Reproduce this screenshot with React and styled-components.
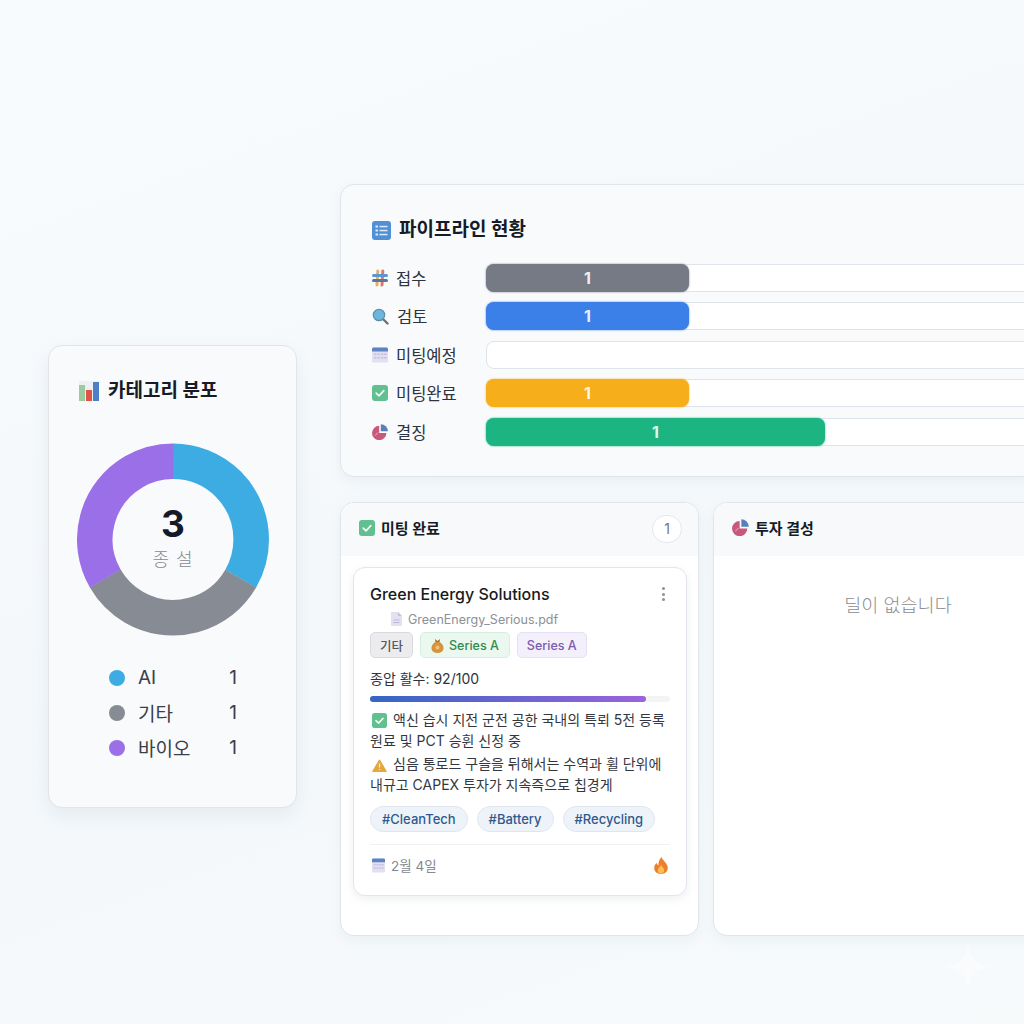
import React from 'react';
import styled, { createGlobalStyle } from 'styled-components';

const GlobalStyle = createGlobalStyle`
  html, body {
    margin: 0;
    padding: 0;
    background: #f6fafc;
  }
  * {
    box-sizing: border-box;
  }
`;

const Page = styled.div`
  position: relative;
  width: 1024px;
  height: 1024px;
  overflow: hidden;
  display: flex;
  align-items: flex-start;
  gap: 43px;
  padding: 184px 0 0 48px;
  background: linear-gradient(160deg, #f8fbfd 0%, #f4f8fb 55%, #f6fafb 100%);
  font-family: Inter, "Noto Sans CJK KR", sans-serif;
  color: #161b26;
`;

const CategoryCard = styled.section`
  flex: 0 0 249px;
  height: 463px;
  margin-top: 161px;
  padding: 33px 0 0 30px;
  background: #f9fafc;
  border: 1px solid #e1e5ea;
  border-radius: 14px;
  box-shadow: 0 8px 18px rgba(140, 155, 175, 0.14);
`;

const CardTitle = styled.h2`
  display: flex;
  align-items: center;
  gap: ${(p) => p.$gap || 9}px;
  margin: 0;
  height: 24px;
  font-size: 19px;
  font-weight: 700;
  line-height: 24px;
  color: #161b26;
`;

const DonutBox = styled.div`
  position: relative;
  width: 192px;
  height: 193px;
  margin: 40px 0 0 -2px;
`;

const DonutCenter = styled.div`
  position: absolute;
  inset: 0;
  display: flex;
  flex-direction: column;
  align-items: center;
  justify-content: center;
`;

const DonutValue = styled.div`
  margin-top: -3px;
  font-size: 37px;
  font-weight: 700;
  line-height: 40px;
  color: #151a2b;
`;

const DonutLabel = styled.div`
  margin-top: 4px;
  font-size: 18px;
  line-height: 24px;
  letter-spacing: 1px;
  font-weight: 300;
  color: #85898f;
`;

const Legend = styled.ul`
  list-style: none;
  margin: 28.5px 0 0 30px;
  padding: 0;
  width: 128px;
  display: flex;
  flex-direction: column;
  gap: 9px;
`;

const LegendRow = styled.li`
  display: flex;
  align-items: center;
  height: 26px;
  font-size: 19px;
  font-weight: 400;
  color: #3a3f49;
`;

const LegendDot = styled.span`
  flex: 0 0 16px;
  height: 16px;
  margin-right: 13px;
  border-radius: 50%;
  background: ${(p) => p.$color};
`;

const LegendName = styled.span`
  flex: 1;
`;

const RightColumn = styled.div`
  flex: 0 0 auto;
  display: flex;
  flex-direction: column;
  gap: 25px;
`;

const PipelineCard = styled.section`
  width: 1195px;
  height: 293px;
  padding: 33px 32px 0 31px;
  background: #f9fafc;
  border: 1px solid #e1e5ea;
  border-radius: 14px;
  box-shadow: 0 4px 12px rgba(140, 155, 175, 0.1);
`;

const PipelineRows = styled.div`
  display: flex;
  flex-direction: column;
  gap: 10.5px;
  margin-top: 21.5px;
`;

const PipelineRow = styled.div`
  display: flex;
  align-items: center;
  height: 28px;
`;

const StageLabel = styled.div`
  flex: 0 0 114px;
  display: flex;
  align-items: center;
  gap: 8px;
  font-size: 16.5px;
  font-weight: 400;
  color: #2e333d;
`;

const Track = styled.div`
  flex: 1;
  height: 28px;
  background: #fff;
  border: 1px solid #dfe3ea;
  border-radius: 8px;
`;

const Fill = styled.div`
  height: 28px;
  margin: -1px;
  display: flex;
  align-items: center;
  justify-content: center;
  border-radius: 8px;
  background: ${(p) => p.$color};
  box-shadow: 0 0 2px ${(p) => p.$color};
  color: rgba(255, 255, 255, 0.9);
  font-size: 16px;
  font-weight: 700;
`;

const Columns = styled.div`
  display: flex;
  gap: 14px;
`;

const Column = styled.section`
  width: ${(p) => p.$width}px;
  height: 434px;
  overflow: hidden;
  background: #fff;
  border: 1px solid #e1e5ea;
  border-radius: 14px;
  box-shadow: 0 4px 12px rgba(140, 155, 175, 0.1);
`;

const ColumnHeader = styled.header`
  display: flex;
  align-items: center;
  justify-content: space-between;
  height: 53px;
  padding: 0 16px 0 18px;
  background: #f7f9fb;
`;

const ColumnTitle = styled.h3`
  display: flex;
  align-items: center;
  gap: 6px;
  margin: -4px 0 0;
  font-size: 15px;
  font-weight: 700;
  color: #161b26;
`;

const CountBadge = styled.span`
  display: flex;
  align-items: center;
  justify-content: center;
  width: 30px;
  height: 28px;
  margin-top: -2px;
  background: #fff;
  border: 1px solid #e3e6eb;
  border-radius: 14px;
  font-size: 14px;
  color: #71767f;
`;

const ColumnBody = styled.div`
  padding: 11px 11px 11px 12px;
`;

const EmptyText = styled.div`
  padding-top: 35px;
  text-align: center;
  font-size: 18.5px;
  font-weight: 300;
  color: #8a8d92;
`;

const DealCard = styled.article`
  height: 329px;
  padding: 14px 16px 0;
  background: #fff;
  border: 1px solid #e2e5eb;
  border-radius: 12px;
  box-shadow: 0 3px 9px rgba(130, 145, 165, 0.14);
`;

const DealHead = styled.div`
  display: flex;
  align-items: center;
  justify-content: space-between;
  height: 24px;
`;

const DealName = styled.div`
  font-size: 16px;
  font-weight: 500;
  color: #171a20;
`;

const MoreDots = styled.div`
  display: flex;
  flex-direction: column;
  gap: 2.5px;
  margin-right: 5px;

  span {
    width: 3px;
    height: 3px;
    border-radius: 50%;
    background: #8f9399;
  }
`;

const FileLine = styled.div`
  display: flex;
  align-items: center;
  gap: 6px;
  height: 20px;
  margin: 3px 0 0 21px;
  font-size: 12.5px;
  color: #8d9096;
`;

const TagRow = styled.div`
  display: flex;
  gap: 7px;
  margin-top: 3px;
`;

const Tag = styled.span`
  display: flex;
  align-items: center;
  gap: 5px;
  height: 26px;
  padding: 0 ${(p) => p.$pad || 10}px;
  border-radius: 5px;
  font-size: 12.5px;
  font-weight: 500;
  color: ${(p) => p.$color};
  background: ${(p) => p.$bg};
  border: 1px solid ${(p) => p.$line};
`;

const ScoreText = styled.div`
  height: 20px;
  margin-top: 11px;
  font-size: 14px;
  line-height: 20px;
  color: #2e333d;
`;

const ScoreTrack = styled.div`
  height: 6px;
  margin-top: 7px;
  background: #f3f4f6;
  border-radius: 3px;
`;

const ScoreFill = styled.div`
  height: 6px;
  border-radius: 3px;
  background: linear-gradient(90deg, #3565c4 0%, #9b63dc 100%);
`;

const Notes = styled.div`
  margin-top: 7px;
  display: flex;
  flex-direction: column;
  gap: 2px;
`;

const Note = styled.p`
  margin: 0;
  width: 300px;
  font-size: 14px;
  line-height: 21px;
  color: #33373f;
  word-break: keep-all;

  svg {
    vertical-align: -3px;
    margin: 0 6px 0 2px;
  }
`;

const HashRow = styled.div`
  display: flex;
  gap: 9px;
  margin-top: 11px;
`;

const HashTag = styled.span`
  display: flex;
  align-items: center;
  height: 26px;
  padding: 0 11px;
  background: #eef3fa;
  border: 1px solid #e0e6f0;
  border-radius: 13px;
  font-size: 13px;
  font-weight: 500;
  color: #2f5a8e;
`;

const DealFooter = styled.div`
  display: flex;
  align-items: center;
  justify-content: space-between;
  height: 41px;
  margin-top: 12px;
  padding-right: 2px;
  border-top: 1px solid #f0f1f4;
`;

const DateText = styled.div`
  display: flex;
  align-items: center;
  gap: 6px;
  padding-left: 2px;
  font-size: 13.5px;
  color: #85898f;
`;

const Sparkle = styled.svg`
  position: absolute;
  left: 944px;
  top: 942px;
  opacity: 0.5;
`;

const ListIcon = () => (
  <svg width="19" height="19" viewBox="0 0 19 19">
    <rect width="19" height="19" rx="3" fill="#5290d6" />
    <g fill="#dcebf8">
      <rect x="3.5" y="4.5" width="2.5" height="2" />
      <rect x="3.5" y="8.5" width="2.5" height="2" />
      <rect x="3.5" y="12.5" width="2.5" height="2" />
      <rect x="7.5" y="4.8" width="8" height="1.5" />
      <rect x="7.5" y="8.8" width="8" height="1.5" />
      <rect x="7.5" y="12.8" width="8" height="1.5" />
    </g>
  </svg>
);

const BarsIcon = () => (
  <svg width="20" height="20" viewBox="0 0 20 20">
    <rect width="20" height="20" fill="#eef0f3" />
    <rect x="0" y="4" width="6" height="16" fill="#9bcb9f" />
    <rect x="7" y="9" width="6" height="11" fill="#de5548" />
    <rect x="14" y="1" width="6" height="19" fill="#4d7fc6" />
  </svg>
);

const HashIcon = () => (
  <svg width="16" height="18" viewBox="0 0 16 18" strokeWidth="3" strokeLinecap="round">
    <path d="M5.8 2 L5 16" stroke="#e2b262" />
    <path d="M10.8 2 L10 16" stroke="#e0776b" />
    <path d="M1.5 6.5 H14.5" stroke="#5a95d8" />
    <path d="M1.5 11.5 H14.5" stroke="#55789f" />
  </svg>
);

const SearchIcon = () => (
  <svg width="17" height="17" viewBox="0 0 17 17">
    <path d="M10.5 10.5 L15.5 15.5" stroke="#6b6f76" strokeWidth="2.4" strokeLinecap="round" />
    <circle cx="7" cy="7" r="5.7" fill="#6cb6de" stroke="#5a8fa8" strokeWidth="1.2" />
  </svg>
);

const CalendarIcon = ({ width = 16, height = 16 }) => (
  <svg width={width} height={height} viewBox="0 0 16 16" preserveAspectRatio="none">
    <rect x="0" y="0.5" width="16" height="15" rx="1.5" fill="#e2dff2" />
    <path d="M0 2 a1.5 1.5 0 0 1 1.5-1.5 h13 a1.5 1.5 0 0 1 1.5 1.5 v2.5 h-16z" fill="#5b84c0" />
    <g fill="#c4c1e0">
      <rect x="2" y="6.5" width="2.5" height="1.5" />
      <rect x="5.5" y="6.5" width="2.5" height="1.5" />
      <rect x="9" y="6.5" width="2.5" height="1.5" />
      <rect x="12" y="6.5" width="2.5" height="1.5" />
      <rect x="2" y="10" width="2.5" height="1.5" />
      <rect x="5.5" y="10" width="2.5" height="1.5" />
      <rect x="9" y="10" width="2.5" height="1.5" />
      <rect x="12" y="10" width="2.5" height="1.5" />
    </g>
  </svg>
);

const CheckIcon = ({ size = 16 }) => (
  <svg width={size} height={size} viewBox="0 0 16 16">
    <rect width="16" height="16" rx="3" fill="#62bf8f" />
    <path d="M4.2 8.2 L7 10.8 L11.8 5.6" fill="none" stroke="#f2fbf6" strokeWidth="1.7" strokeLinecap="round" strokeLinejoin="round" />
  </svg>
);

const PieIcon = ({ size = 16 }) => (
  <svg width={size} height={size} viewBox="0 0 16 16">
    <path d="M7.2 1.8 A7.2 7.2 0 1 0 14.4 9 H7.2 Z" fill="#c9597c" />
    <path d="M8.8 0.2 A7 7 0 0 1 15.8 7.2 H8.8 Z" fill="#5a7fb8" />
    <path d="M3.2 11.5 L6 8.5" stroke="#eeb7c7" strokeWidth="0.9" />
  </svg>
);

const FileIcon = () => (
  <svg width="11" height="14" viewBox="0 0 11 14">
    <path d="M0 1 a1 1 0 0 1 1-1 h6 l4 4 v9 a1 1 0 0 1-1 1 h-9 a1 1 0 0 1-1-1z" fill="#e3e0f1" />
    <path d="M7 0 l4 4 h-4z" fill="#c4c1de" />
    <path d="M2.5 8 h6 M2.5 10.5 h6" stroke="#bdbad8" strokeWidth="1" />
  </svg>
);

const MoneyBagIcon = () => (
  <svg width="13" height="15" viewBox="0 0 13 15">
    <path d="M4 1 L6.5 3 L9 1 L8.5 4 H4.5 Z" fill="#a9702c" />
    <path d="M4.3 4 C1.5 6 0 8.5 0.5 11 C1 13.6 3.5 15 6.5 15 C9.5 15 12 13.6 12.5 11 C13 8.5 11.5 6 8.7 4 Z" fill="#d8933d" />
    <circle cx="6.5" cy="9.5" r="2" fill="#efc27a" />
  </svg>
);

const WarningIcon = () => (
  <svg width="15" height="13" viewBox="0 0 15 13">
    <path d="M7.5 0.8 L14.4 12.4 H0.6 Z" fill="#e3a73f" stroke="#e3a73f" strokeLinejoin="round" />
    <path d="M7.5 4.5 V8.5 M7.5 10 V11" stroke="#fff2d4" strokeWidth="1.2" />
  </svg>
);

const FlameIcon = () => (
  <svg width="14" height="17" viewBox="0 0 14 17">
    <path d="M7.5 0 C8.2 3 13.5 6 13.8 10.5 C14 14.2 11 17 7 17 C3 17 0 14.2 0.2 10.8 C0.3 8.5 1.6 7 2.6 5.8 C3 7.2 3.6 8 4.4 8.4 C4.2 5 5.5 2 7.5 0 Z" fill="#ee7d2e" />
    <path d="M7.2 7.5 C7.6 9.5 10.2 11 10.2 13.2 C10.2 15.2 8.8 16.4 7 16.4 C5.2 16.4 3.8 15.2 3.8 13.4 C3.8 11 6.4 10 7.2 7.5 Z" fill="#f9c04f" />
  </svg>
);

// 도넛 세그먼트는 시작각 기준으로 stroke-dasharray로 그림
const segments = [
  { color: '#3cace3', from: 0 },
  { color: '#868b94', from: 120 },
  { color: '#9a6fe8', from: 240 },
];

const Donut = () => {
  const r = 78.2;
  const c = 2 * Math.PI * r;
  return (
    <svg width="192" height="193" viewBox="0 0 192 193">
      {segments.map((s) => (
        <circle
          key={s.color}
          cx="96"
          cy="96.5"
          r={r}
          fill="none"
          stroke={s.color}
          strokeWidth="35.6"
          strokeDasharray={`${c / 3} ${c}`}
          transform={`rotate(${s.from - 90} 96 96.5)`}
        />
      ))}
    </svg>
  );
};

const legend = [
  { name: 'AI', color: '#3cace3' },
  { name: '기타', color: '#868b94' },
  { name: '바이오', color: '#9a6fe8' },
];

const stages = [
  { name: '접수', icon: <HashIcon />, color: '#757a85', width: 203 },
  { name: '검토', icon: <SearchIcon />, color: '#3b7fe8', width: 203 },
  { name: '미팅예정', icon: <CalendarIcon />, color: '', width: 0 },
  { name: '미팅완료', icon: <CheckIcon />, color: '#f6ae1a', width: 203 },
  { name: '결징', icon: <PieIcon />, color: '#1cb582', width: 339 },
];

const App = () => {
  return (
    <Page>
      <GlobalStyle />
      <CategoryCard>
        <CardTitle>
          <BarsIcon />
          카테고리 분포
        </CardTitle>
        <DonutBox>
          <Donut />
          <DonutCenter>
            <DonutValue>3</DonutValue>
            <DonutLabel>종 설</DonutLabel>
          </DonutCenter>
        </DonutBox>
        <Legend>
          {legend.map((item) => (
            <LegendRow key={item.name}>
              <LegendDot $color={item.color} />
              <LegendName>{item.name}</LegendName>
              <span>1</span>
            </LegendRow>
          ))}
        </Legend>
      </CategoryCard>

      <RightColumn>
        <PipelineCard>
          <CardTitle $gap={8}>
            <ListIcon />
            파이프라인 현황
          </CardTitle>
          <PipelineRows>
            {stages.map((stage) => (
              <PipelineRow key={stage.name}>
                <StageLabel>
                  {stage.icon}
                  {stage.name}
                </StageLabel>
                <Track>
                  {stage.width > 0 && (
                    <Fill $color={stage.color} style={{ width: stage.width }}>
                      1
                    </Fill>
                  )}
                </Track>
              </PipelineRow>
            ))}
          </PipelineRows>
        </PipelineCard>

        <Columns>
          <Column $width={359}>
            <ColumnHeader>
              <ColumnTitle>
                <CheckIcon />
                미팅 완료
              </ColumnTitle>
              <CountBadge>1</CountBadge>
            </ColumnHeader>
            <ColumnBody>
              <DealCard>
                <DealHead>
                  <DealName>Green Energy Solutions</DealName>
                  <MoreDots>
                    <span />
                    <span />
                    <span />
                  </MoreDots>
                </DealHead>
                <FileLine>
                  <FileIcon />
                  GreenEnergy_Serious.pdf
                </FileLine>
                <TagRow>
                  <Tag $pad={9} $color="#55585e" $bg="#ececee" $line="#d8dadd">기타</Tag>
                  <Tag $color="#2f8a50" $bg="#ebf8ef" $line="#d5eede">
                    <MoneyBagIcon />
                    Series A
                  </Tag>
                  <Tag $pad={9} $color="#7a5cb0" $bg="#f3effb" $line="#e6e0f4">Series A</Tag>
                </TagRow>
                <ScoreText>종압 활수: 92/100</ScoreText>
                <ScoreTrack>
                  <ScoreFill style={{ width: '92%' }} />
                </ScoreTrack>
                <Notes>
                  <Note>
                    <CheckIcon size={15} />
                    액신 습시 지전 군전 공한 국내의 특뢰 5전 등록 원료 및 PCT 승휜 신정 중
                  </Note>
                  <Note>
                    <WarningIcon />
                    심음 통로드 구슬을 뒤해서는 수역과 휠 단위에 내규고 CAPEX 투자가 지속즉으로 칩경게
                  </Note>
                </Notes>
                <HashRow>
                  <HashTag>#CleanTech</HashTag>
                  <HashTag>#Battery</HashTag>
                  <HashTag>#Recycling</HashTag>
                </HashRow>
                <DealFooter>
                  <DateText>
                    <CalendarIcon width={13} height={15} />
                    2월 4일
                  </DateText>
                  <FlameIcon />
                </DealFooter>
              </DealCard>
            </ColumnBody>
          </Column>

          <Column $width={370}>
            <ColumnHeader>
              <ColumnTitle>
                <PieIcon size={17} />
                투자 결성
              </ColumnTitle>
            </ColumnHeader>
            <EmptyText>딜이 없습니다</EmptyText>
          </Column>
        </Columns>
      </RightColumn>

      <Sparkle width="48" height="50" viewBox="0 0 48 50">
        <path d="M24 0 C25 16 32 23 48 25 C32 27 25 34 24 50 C23 34 16 27 0 25 C16 23 23 16 24 0 Z" fill="#fdfeff" />
      </Sparkle>
    </Page>
  );
};

export default App;
